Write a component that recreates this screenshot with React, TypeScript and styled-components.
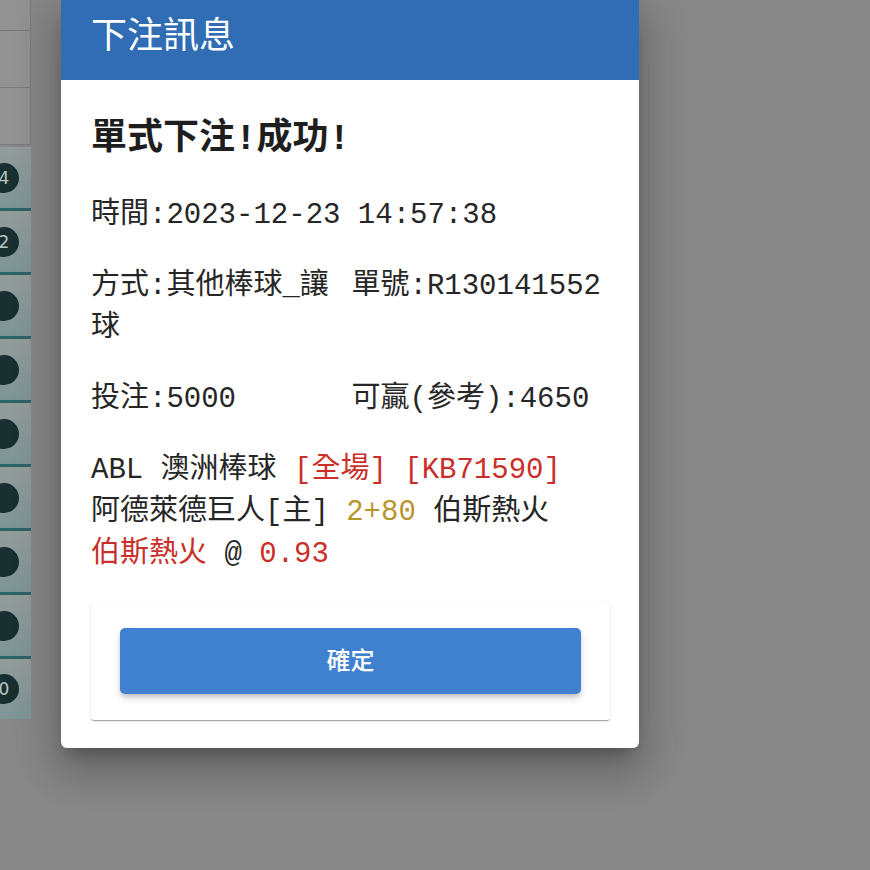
import React from 'react';
import styled, { createGlobalStyle } from 'styled-components';

const GlobalStyle = createGlobalStyle`
  html, body {
    margin: 0;
    padding: 0;
    background: #878787;
  }
  * {
    box-sizing: border-box;
  }
`;

const rows = ['4', '2', '', '', '', '', '', '', '0'];

export default function App() {
  return (
    <>
      <GlobalStyle />
      <Backdrop>
        <SideStrip>
          <TopCell $h={31} />
          <TopCell $h={57} />
          <TopCell $h={57} />
          <Rows>
            {rows.map((n, idx) => (
              <StripRow key={idx} $last={idx === rows.length - 1}>
                <Ball>{n}</Ball>
              </StripRow>
            ))}
          </Rows>
        </SideStrip>

        <Dialog>
          <Header>
            <HeaderTitle>下注訊息</HeaderTitle>
          </Header>
          <Body>
            <Title>單式下注!成功!</Title>
            <Line>時間:2023-12-23 14:57:38</Line>
            <TwoCols>
              <Line>方式:其他棒球_讓球</Line>
              <Line>單號:R130141552</Line>
            </TwoCols>
            <TwoCols>
              <Line>投注:5000</Line>
              <Line>可贏(參考):4650</Line>
            </TwoCols>
            <Line $last>
              ABL 澳洲棒球 <Tint $c="#cb2f2a">[全場]</Tint> <Tint $c="#cb2f2a">[KB71590]</Tint>
              <br />
              阿德萊德巨人[主] <Tint $c="#b8952c">2+80</Tint> 伯斯熱火
              <br />
              <Tint $c="#cb2f2a">伯斯熱火</Tint> @ <Tint $c="#cb2f2a">0.93</Tint>
            </Line>
            <ActionCard>
              <ConfirmButton>確定</ConfirmButton>
            </ActionCard>
          </Body>
        </Dialog>
      </Backdrop>
    </>
  );
}

const Backdrop = styled.div`
  display: flex;
  align-items: flex-start;
  width: 870px;
  height: 870px;
  overflow: hidden;
  background: #878787;
`;

const SideStrip = styled.div`
  display: flex;
  flex-direction: column;
  width: 31px;
  flex-shrink: 0;
  overflow: hidden;
`;

const TopCell = styled.div<{ $h: number }>`
  height: ${p => p.$h}px;
  background: #929292;
  border-right: 1px solid #7b7b7b;
  border-bottom: 1px solid #7b7b7b;
`;

const Rows = styled.div`
  display: flex;
  flex-direction: column;
  margin-top: 2px;
`;

const StripRow = styled.div<{ $last?: boolean }>`
  display: flex;
  align-items: center;
  height: ${p => (p.$last ? 60 : 64)}px;
  background: linear-gradient(180deg, #939a9a 0%, #7e9595 100%);
  border-bottom: ${p => (p.$last ? 'none' : '3px solid #2e6366')};
`;

const Ball = styled.div`
  display: flex;
  align-items: center;
  justify-content: center;
  width: 30px;
  height: 30px;
  margin-left: -11px;
  border-radius: 50%;
  background: #182f30;
  color: #b9c4c4;
  font-family: 'DejaVu Sans', sans-serif;
  font-size: 17px;
`;

const Dialog = styled.div`
  width: 578px;
  margin-left: 30px;
  flex-shrink: 0;
  background: #ffffff;
  border-radius: 0 0 6px 6px;
  box-shadow: 0 11px 15px -7px rgba(0, 0, 0, 0.25), 0 24px 38px 3px rgba(0, 0, 0, 0.16),
    0 9px 46px 8px rgba(0, 0, 0, 0.12);
`;

const Header = styled.div`
  height: 80px;
  padding: 7px 30px 0;
  background: #306db4;
`;

const HeaderTitle = styled.h2`
  margin: 0;
  color: #ffffff;
  font-family: 'Noto Sans CJK TC', sans-serif;
  font-weight: 400;
  font-size: 36px;
  line-height: 50px;
`;

const Body = styled.div`
  display: flex;
  flex-direction: column;
  padding: 36px 29px 28px 30px;
  font-family: 'Liberation Mono', 'Noto Sans CJK TC', monospace;
  color: #262626;
`;

const Title = styled.h3`
  margin: 0 0 31px;
  font-family: 'Liberation Mono', 'Noto Sans CJK TC', monospace;
  font-size: 36px;
  font-weight: 700;
  line-height: 48px;
  color: #1e1e1e;
`;

const Line = styled.div<{ $last?: boolean }>`
  margin: 0 0 ${p => (p.$last ? 26 : 29)}px;
  font-size: 29px;
  line-height: 42px;
  word-break: break-all;
`;

const TwoCols = styled.div`
  display: grid;
  grid-template-columns: 1fr 1fr;
  column-gap: 2px;
`;

const Tint = styled.span<{ $c: string }>`
  color: ${p => p.$c};
`;

const ActionCard = styled.div`
  display: flex;
  padding: 26px 29px;
  background: #ffffff;
  border-radius: 3px;
  box-shadow: 0 2px 1px -1px rgba(0, 0, 0, 0.2), 0 1px 1px 0 rgba(0, 0, 0, 0.14),
    0 1px 3px 0 rgba(0, 0, 0, 0.12);
`;

const ConfirmButton = styled.button`
  flex: 1;
  height: 66px;
  padding: 0 0 6px;
  border: none;
  border-radius: 5px;
  background: #3f81cf;
  color: #ffffff;
  font-family: 'Noto Sans CJK TC', sans-serif;
  font-size: 24px;
  font-weight: 500;
  cursor: pointer;
  box-shadow: 0 3px 5px -1px rgba(0, 0, 0, 0.2), 0 5px 8px 0 rgba(0, 0, 0, 0.1);
`;
